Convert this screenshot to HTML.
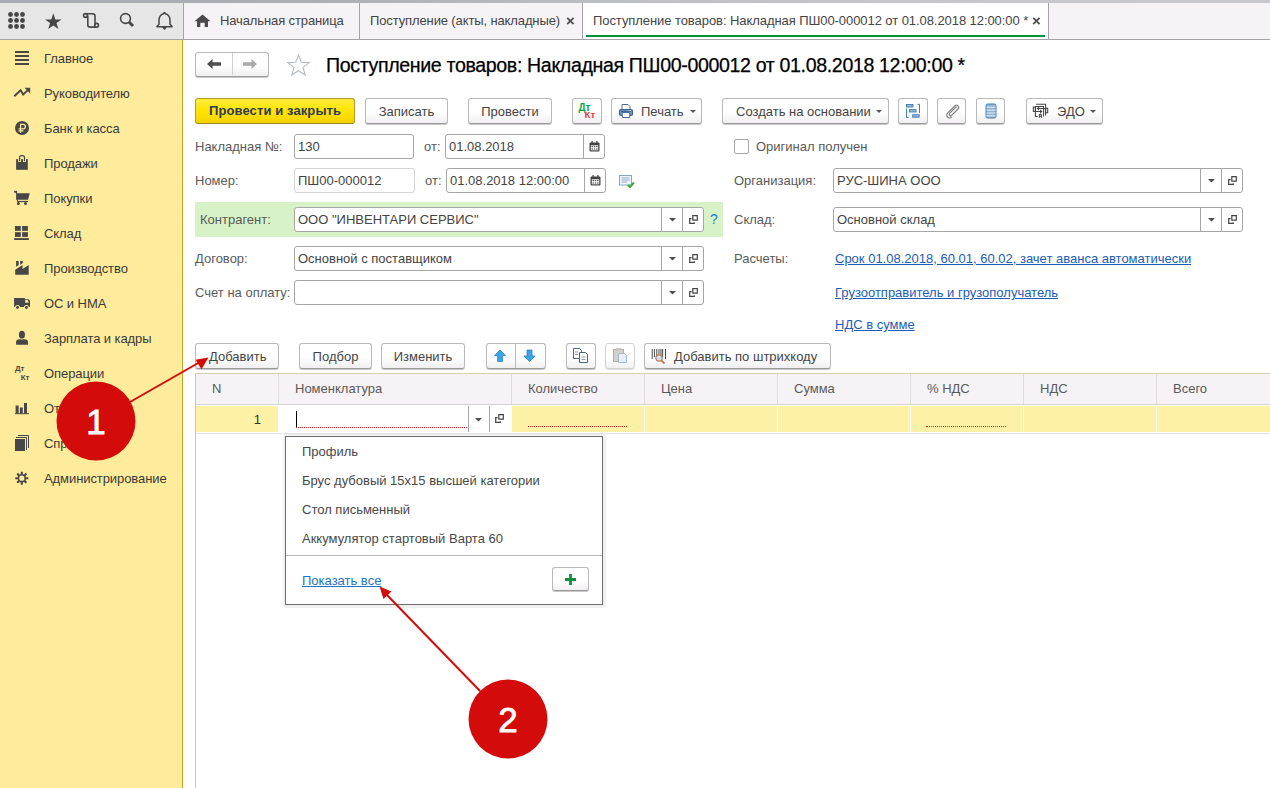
<!DOCTYPE html>
<html><head><meta charset="utf-8">
<style>
*{box-sizing:border-box;margin:0;padding:0}
html,body{width:1270px;height:788px;overflow:hidden;background:#fff;font-family:"Liberation Sans",sans-serif;font-size:13px;color:#333}
.a{position:absolute}
#topstrip{left:0;top:0;width:1270px;height:3px;background:linear-gradient(90deg,#a9abb4 0px,#adafb5 320px,#bfc0c4 640px,#c8c8cc 1000px,#c9c9cd 1270px)}
#tb{left:0;top:3px;width:183px;height:36px;background:#e6e6e6}
#tabs{left:184px;top:3px;width:1086px;height:36px;background:#f6f3f6}
#tbline{left:0;top:39px;width:1270px;height:1px;background:#a4a4a4}
#sep1{left:183px;top:3px;width:1px;height:36px;background:#a4a4a4}
#side{left:0;top:40px;width:182px;height:748px;background:#ffeb9c}
#sideb{left:182px;top:40px;width:1px;height:748px;background:#bba31c;box-shadow:-1px 0 0 #fff09e}
.si{position:absolute;left:44px;white-space:nowrap;color:#3a3a3a;letter-spacing:-0.08px}
.tabt{position:absolute;top:13px;white-space:nowrap;color:#444;letter-spacing:-0.12px}
.lbl{position:absolute;white-space:nowrap;color:#4d4d4d}
.fld{position:absolute;border:1px solid #a9a9a9;border-radius:3px;background:#fff;height:25px}
.fld .v{position:absolute;left:4px;top:5px;white-space:nowrap;color:#333}
.btn{position:absolute;height:26px;border:1px solid #b8b8b8;border-radius:3px;background:linear-gradient(#fff 60%,#ebebeb);box-shadow:0 1px 1px rgba(0,0,0,.25);white-space:nowrap;color:#333;text-align:center;line-height:24px}

.bt{position:absolute;height:26px;border:1px solid #b9b9b9;border-bottom-color:#9a9a9a;border-radius:3px;background:linear-gradient(#fff 0%,#fff 55%,#f1eff1 100%);box-shadow:0 1px 0 #c8c8c8;white-space:nowrap;color:#444;text-align:center;line-height:15px;padding-top:5px}
.lb{position:absolute;white-space:nowrap;color:#5a5a5a;margin-top:1px}
.f{position:absolute;border:1px solid #a6a6a6;border-radius:3px;background:#fff;height:25px}
.f .v{position:absolute;left:3px;top:4px;white-space:nowrap;color:#444}
.f .d{position:absolute;top:0;width:1px;height:23px;background:#a6a6a6}
.lk{position:absolute;white-space:nowrap;color:#1d5cb8;text-decoration:underline}
</style></head><body>
<div class="a" id="topstrip"></div>
<div class="a" id="tb"></div>
<div class="a" id="tabs"></div>
<div class="a" id="sep1"></div>
<div class="a" id="tbline"></div>
<div class="a" id="side"></div>
<div class="a" id="sideb"></div>

<!-- active tab -->
<div class="a" style="left:583px;top:3px;width:465px;height:36px;background:#fff"></div>
<div class="a" style="left:359px;top:3px;width:1px;height:36px;background:#a4a4a4"></div>
<div class="a" style="left:582px;top:3px;width:1px;height:36px;background:#a4a4a4"></div>
<div class="a" style="left:1048px;top:3px;width:1px;height:36px;background:#a4a4a4"></div>
<div class="a" style="left:586px;top:35px;width:459px;height:2px;background:#00933e"></div>
<div class="tabt" style="left:220px">Начальная страница</div>
<div class="tabt" style="left:370px">Поступление (акты, накладные)</div>
<div class="tabt" style="left:593px;letter-spacing:-0.07px">Поступление товаров: Накладная ПШ00-000012 от 01.08.2018 12:00:00 *</div>

<!-- sidebar items -->
<div class="si" style="top:51px">Главное</div>
<div class="si" style="top:86px">Руководителю</div>
<div class="si" style="top:121px">Банк и касса</div>
<div class="si" style="top:156px">Продажи</div>
<div class="si" style="top:191px">Покупки</div>
<div class="si" style="top:226px">Склад</div>
<div class="si" style="top:261px">Производство</div>
<div class="si" style="top:296px">ОС и НМА</div>
<div class="si" style="top:331px">Зарплата и кадры</div>
<div class="si" style="top:366px">Операции</div>
<div class="si" style="top:401px">Отчеты</div>
<div class="si" style="top:436px">Справочники</div>
<div class="si" style="top:471px">Администрирование</div>


<!-- toolbar icons -->
<svg class="a" style="left:0;top:0" width="183" height="39" viewBox="0 0 183 39">
 <g fill="#474747">
  <circle cx="10.5" cy="14.5" r="2.4"/><circle cx="16.5" cy="14.5" r="2.4"/><circle cx="22.5" cy="14.5" r="2.4"/>
  <circle cx="10.5" cy="20.5" r="2.4"/><circle cx="16.5" cy="20.5" r="2.4"/><circle cx="22.5" cy="20.5" r="2.4"/>
  <circle cx="10.5" cy="26.5" r="2.4"/><circle cx="16.5" cy="26.5" r="2.4"/><circle cx="22.5" cy="26.5" r="2.4"/>
  <path d="M53.3 13.3 L55.3 19.4 L61.6 19.4 L56.5 23.1 L58.4 29 L53.3 25.4 L48.2 29 L50.1 23.1 L45 19.4 L51.3 19.4 Z"/>
 </g>
 <g fill="none" stroke="#474747" stroke-width="1.6">
  <path d="M85.5 13.7 H92.6 Q95 13.7 95 16.1 V25.3 M96.6 27.1 H90.2 Q87.8 27.1 87.8 24.7 V15.5"/>
  <circle cx="85.5" cy="15.5" r="1.9"/>
  <circle cx="96.6" cy="25.3" r="1.9"/>
  <circle cx="125.5" cy="18.5" r="4.9"/>
 </g>
 <path d="M129 22 L133 26" stroke="#474747" stroke-width="3"/>
 <path d="M164.5 12.5 L165.5 13.8 Q170 15.2 170 20.5 V24.2 L172 26.2 V26.8 H157 V26.2 L159 24.2 V20.5 Q159 15.2 163.5 13.8 Z M163 27.3 H166 L164.5 29 Z" fill="none" stroke="#474747" stroke-width="1.5" stroke-linejoin="round"/>
</svg>
<!-- home icon -->
<svg class="a" style="left:194px;top:14px" width="18" height="14" viewBox="0 0 18 14">
 <path d="M8.5 0.6 L16.5 7.2 H14 V13 H10.7 V8.7 H6.3 V13 H3 V7.2 H0.5 Z" fill="#4a4a4a"/>
</svg>
<!-- close x -->
<svg class="a" style="left:566px;top:17px" width="9" height="8" viewBox="0 0 9 8"><path d="M1.2 0.8 L7.6 7.2 M7.6 0.8 L1.2 7.2" stroke="#4d4d4d" stroke-width="1.7"/></svg>
<svg class="a" style="left:1032px;top:17px" width="9" height="8" viewBox="0 0 9 8"><path d="M1.2 0.8 L7.6 7.2 M7.6 0.8 L1.2 7.2" stroke="#4d4d4d" stroke-width="1.7"/></svg>

<!-- sidebar icons -->
<svg class="a" style="left:0;top:40px" width="40" height="460" viewBox="0 40 40 460">
 <g fill="#474747">
  <rect x="15" y="51" width="14" height="2"/><rect x="15" y="55" width="14" height="2"/><rect x="15" y="59" width="14" height="2"/><rect x="15" y="63" width="14" height="2"/>
  <path d="M24.5 87.8 L30.2 87.8 L30.2 93.5 Z"/>
  <circle cx="22" cy="128" r="7"/>
  <path d="M16.1 159.1 H27.8 V169.8 H16.1 Z"/>
  <rect x="14.1" y="190.9" width="2.9" height="1.8"/><rect x="15.9" y="190.9" width="1.2" height="3"/>
  <path d="M16.1 193.2 H29.8 L28 199.8 H16.1 Z"/>
  <rect x="16.9" y="199.5" width="1" height="2.2"/>
  <rect x="17.2" y="200.9" width="10.8" height="1.2"/>
  <circle cx="18.4" cy="203.5" r="1.5"/><circle cx="25.5" cy="203.5" r="1.5"/>
  <rect x="15" y="226" width="5.8" height="4.8"/><rect x="22.1" y="226" width="5.8" height="4.8"/>
  <rect x="15" y="232.2" width="5.8" height="4.7"/><rect x="22.1" y="232.2" width="5.8" height="4.7"/>
  <rect x="14.1" y="238.1" width="14.8" height="1.9"/>
  <path d="M15.2 274.7 V269.7 L22.5 265.1 V269.1 L28.7 265.1 V274.7 Z"/><path d="M16.1 261 H18.7 V265.1 L16.1 266.7 Z"/><path d="M20.2 261 H22.8 V262.9 L20.2 264.8 Z"/>
  <path d="M14.1 297.9 H24.8 V299.2 H28.3 Q29.2 299.2 29.6 300.2 L30 301.5 V306.9 H14.1 Z"/>
  <path d="M16.1 344.8 V342.3 Q16.1 339.3 19.5 339.3 H24.6 Q28 339.3 28 342.3 V344.8 Z"/>
  <ellipse cx="21.95" cy="334.7" rx="3.9" ry="4.8" fill="#ffeb9c"/>
  <ellipse cx="21.95" cy="334.7" rx="3" ry="3.9"/>
  <rect x="15.6" y="405.5" width="3" height="8"/><rect x="19.8" y="407.5" width="3" height="6"/><rect x="24" y="403" width="3" height="10.5"/>
  <rect x="15" y="413.2" width="14" height="1"/>
  <rect x="15" y="439" width="10" height="12"/>
 </g>
 <path d="M19.6 162 V158 M24.5 162 V158" stroke="#ffeb9c" stroke-width="3"/><path d="M19.6 161.3 V157.6 Q19.6 155.6 21.6 155.6 H22.5 Q24.5 155.6 24.5 157.6 V161.3" fill="none" stroke="#474747" stroke-width="1.2"/>
 <path d="M14.3 96.3 L20.6 90.2 L23.2 94.5 L28.4 89.6" fill="none" stroke="#474747" stroke-width="1.9"/>
 <path d="M25 115 " />
 <path d="M20.6 133 V124.3 H23.2 Q25.4 124.3 25.4 126.6 Q25.4 128.9 23.2 128.9 H18.6 M18.6 130.8 H23.4" fill="none" stroke="#ffeb9c" stroke-width="1.25"/>
 <path d="M25.2 300.1 H27.9 L28.7 302.8 H25.2 Z" fill="#ffeb9c"/>
 <circle cx="17.5" cy="307.5" r="2.5" fill="#ffeb9c"/><circle cx="26.4" cy="307.5" r="2.5" fill="#ffeb9c"/>
 <circle cx="17.5" cy="307.5" r="1.45" fill="#474747"/><circle cx="26.4" cy="307.5" r="1.45" fill="#474747"/>
 <text x="15" y="371.3" font-family="Liberation Sans" font-size="7.8" font-weight="bold" fill="#474747">Дт</text>
 <text x="20.8" y="379.6" font-family="Liberation Sans" font-size="7.8" font-weight="bold" fill="#474747">Кт</text>
 <path d="M16 437.5 H26.5 V450 M18 435.5 H28.5 V448" fill="none" stroke="#474747" stroke-width="1"/>
 <path d="M25.40 478.20 L28.30 478.20 M24.35 480.75 L26.40 482.80 M21.80 481.80 L21.80 484.70 M19.25 480.75 L17.20 482.80 M18.20 478.20 L15.30 478.20 M19.25 475.65 L17.20 473.60 M21.80 474.60 L21.80 471.70 M24.35 475.65 L26.40 473.60 " stroke="#474747" stroke-width="2.1"/>
 <circle cx="21.8" cy="478.2" r="3.4" fill="none" stroke="#474747" stroke-width="1.6"/>
</svg>


<!-- nav buttons -->
<div class="bt" style="left:195px;top:52px;width:74px;height:25px"></div>
<div class="a" style="left:232px;top:53px;width:1px;height:22px;background:#d0d0d0"></div>
<svg class="a" style="left:205px;top:57px" width="60" height="14" viewBox="0 0 60 14">
 <path d="M2 7 L7.5 2 V5.3 H16 V8.7 H7.5 V12 Z" fill="#4d4d4d"/>
 <path d="M52 7 L46.5 2 V5.3 H38 V8.7 H46.5 V12 Z" fill="#a9a9a9"/>
</svg>
<svg class="a" style="left:286px;top:53px" width="25" height="24" viewBox="0 0 25 24">
 <path d="M12.5 2 L15.3 9.3 L23.2 9.6 L17 14.4 L19.2 22 L12.5 17.7 L5.8 22 L8 14.4 L1.8 9.6 L9.7 9.3 Z" fill="none" stroke="#b4bcc6" stroke-width="1.1" stroke-linejoin="miter"/>
</svg>

<!-- command bar -->
<div class="a" style="left:195px;top:98px;width:160px;height:26px;border:1px solid #b39b2a;border-bottom-color:#9c8620;border-radius:3px;background:linear-gradient(#ffec40 0%,#ffe60a 40%,#ffe000 60%,#f4d200 100%)"></div>
<div class="a" style="left:209px;top:103px;font-weight:bold;color:#2f3a56;white-space:nowrap;letter-spacing:0.1px">Провести и закрыть</div>
<div class="bt" style="left:365px;top:98px;width:83px">Записать</div>
<div class="bt" style="left:468px;top:98px;width:84px">Провести</div>
<div class="bt" style="left:572px;top:98px;width:30px"></div>
<svg class="a" style="left:577px;top:102px" width="20" height="18" viewBox="0 0 20 18">
 <text x="1.5" y="8.6" font-family="Liberation Sans" font-size="10" font-weight="bold" fill="#10a040">Дт</text>
 <text x="7.6" y="15.8" font-family="Liberation Sans" font-size="9.5" font-weight="bold" fill="#e03a3a">Кт</text>
</svg>
<div class="bt" style="left:611px;top:98px;width:91px;text-align:left;padding-left:29px">Печать</div>
<svg class="a" style="left:618px;top:103px" width="16" height="16" viewBox="0 0 16 16">
 <path d="M4 1.5 H10 L12 3.5 V7 H4 Z" fill="#fff" stroke="#4a6f94" stroke-width="1"/>
 <rect x="1.5" y="6.5" width="13" height="6" rx="1.5" fill="#6f98c0" stroke="#3b6590" stroke-width="1.2"/>
 <path d="M3 8.3 H13" stroke="#2c5580" stroke-width="0.9"/>
 <rect x="10.5" y="7.2" width="1" height="0.9" fill="#fff"/><rect x="12" y="7.2" width="1" height="0.9" fill="#fff"/>
 <path d="M4.3 9.5 H11.7 V14.5 H4.3 Z" fill="#fff" stroke="#4a6f94" stroke-width="1"/>
</svg>
<svg class="a" style="left:690px;top:110px" width="6" height="4" viewBox="0 0 6 4"><path d="M0 0 H6 L3 3 Z" fill="#555"/></svg>
<div class="bt" style="left:722px;top:98px;width:167px;text-align:left;padding-left:13px">Создать на основании</div>
<svg class="a" style="left:876px;top:110px" width="6" height="4" viewBox="0 0 6 4"><path d="M0 0 H6 L3 3 Z" fill="#555"/></svg>
<div class="bt" style="left:898px;top:98px;width:30px"></div>
<svg class="a" style="left:904px;top:102px" width="18" height="18" viewBox="0 0 18 18">
 <g fill="#8fb6d8" stroke="#3f7fb5" stroke-width="0.9">
  <rect x="2.5" y="2.5" width="6.5" height="2.5"/><rect x="5.5" y="7.5" width="6.5" height="2.5"/><rect x="8.7" y="12.7" width="6.5" height="2.5"/>
 </g>
 <path d="M2.5 6.5 V15.5 H4.5 M15.5 11 V2.3 H13.5" fill="none" stroke="#3f7fb5" stroke-width="1"/>
</svg>
<div class="bt" style="left:937px;top:98px;width:29px"></div>
<svg class="a" style="left:943px;top:102px" width="18" height="18" viewBox="0 0 18 18">
 <path d="M13.5 4.5 L6.8 11.2 Q5.6 12.4 6.6 13.4 Q7.6 14.4 8.8 13.2 L15 7 Q16.6 5.4 15 3.8 Q13.4 2.2 11.8 3.8 L4.8 10.8 Q2.6 13 4.6 15 Q6.6 17 8.8 14.8" fill="none" stroke="#7a7a7a" stroke-width="1.1"/>
</svg>
<div class="bt" style="left:976px;top:98px;width:29px"></div>
<svg class="a" style="left:985px;top:103px" width="12" height="16" viewBox="0 0 12 16">
 <rect x="1" y="1" width="10" height="14" rx="1.5" fill="#8db4d6" stroke="#4f80ad" stroke-width="1"/>
 <path d="M1.5 4.2 H10.5 M1.5 7.2 H10.5 M1.5 10 H10.5 M1.5 12.8 H10.5" stroke="#e6f0f8" stroke-width="1"/>
</svg>
<div class="bt" style="left:1026px;top:98px;width:77px;text-align:left;padding-left:30px">ЭДО</div>
<svg class="a" style="left:1032px;top:103px" width="18" height="16" viewBox="0 0 18 16">
 <g fill="none" stroke="#444" stroke-width="1.05">
  <path d="M4.1 1.3 H13.6 V12.6"/>
  <path d="M5.8 13.5 H3.4 V3.4 H11.6 V13.6"/>
  <rect x="1.3" y="4.1" width="2.1" height="4.3"/>
  <rect x="13.6" y="5.2" width="2.1" height="4.5"/>
  <path d="M5.5 5.4 H13 M7 4 L5.5 5.4 L7 6.8"/>
  <path d="M3.4 8.4 H9.7 M8.2 7 L9.7 8.4 L8.2 9.8"/>
  <circle cx="8.4" cy="12.2" r="1.1"/>
  <path d="M7.7 13.2 L7 14.8 M9.1 13.2 L9.8 14.8"/>
 </g>
</svg>
<svg class="a" style="left:1090px;top:110px" width="6" height="4" viewBox="0 0 6 4"><path d="M0 0 H6 L3 3 Z" fill="#555"/></svg>

<!-- row1 -->
<div class="lb" style="left:195px;top:138px">Накладная №:</div>
<div class="f" style="left:294px;top:134px;width:120px"><div class="v">130</div></div>
<div class="lb" style="left:424px;top:138px">от:</div>
<div class="f" style="left:445px;top:134px;width:160px"><div class="v">01.08.2018</div><div class="d" style="left:137px"></div><svg style="position:absolute;left:143px;top:6px" width="11" height="11" viewBox="0 0 11 11"><rect x="0.5" y="1.5" width="10" height="9" rx="1" fill="#444"/><rect x="1.8" y="4.3" width="7.4" height="5" fill="#fff"/><g fill="#444"><rect x="2.6" y="5" width="1.3" height="1.2"/><rect x="4.85" y="5" width="1.3" height="1.2"/><rect x="7.1" y="5" width="1.3" height="1.2"/><rect x="2.6" y="7.4" width="1.3" height="1.2"/><rect x="4.85" y="7.4" width="1.3" height="1.2"/><rect x="7.1" y="7.4" width="1.3" height="1.2"/></g><rect x="2.5" y="0" width="1.2" height="2.5" fill="#444"/><rect x="7.3" y="0" width="1.2" height="2.5" fill="#444"/></svg></div>
<div class="a" style="left:734px;top:139px;width:15px;height:15px;border:1px solid #a6a6a6;border-radius:2px;background:#fff"></div>
<div class="lb" style="left:756px;top:138px">Оригинал получен</div>
<!-- row2 -->
<div class="lb" style="left:195px;top:172px">Номер:</div>
<div class="f" style="left:294px;top:168px;width:121px;border-color:#d4d4d4"><div class="v">ПШ00-000012</div></div>
<div class="lb" style="left:425px;top:172px">от:</div>
<div class="f" style="left:446px;top:168px;width:160px"><div class="v">01.08.2018 12:00:00</div><div class="d" style="left:137px"></div><svg style="position:absolute;left:143px;top:6px" width="11" height="11" viewBox="0 0 11 11"><rect x="0.5" y="1.5" width="10" height="9" rx="1" fill="#444"/><rect x="1.8" y="4.3" width="7.4" height="5" fill="#fff"/><g fill="#444"><rect x="2.6" y="5" width="1.3" height="1.2"/><rect x="4.85" y="5" width="1.3" height="1.2"/><rect x="7.1" y="5" width="1.3" height="1.2"/><rect x="2.6" y="7.4" width="1.3" height="1.2"/><rect x="4.85" y="7.4" width="1.3" height="1.2"/><rect x="7.1" y="7.4" width="1.3" height="1.2"/></g><rect x="2.5" y="0" width="1.2" height="2.5" fill="#444"/><rect x="7.3" y="0" width="1.2" height="2.5" fill="#444"/></svg></div>
<div class="lb" style="left:734px;top:172px">Организация:</div>
<div class="f" style="left:833px;top:168px;width:410px"><div class="v">РУС-ШИНА ООО</div><div class="d" style="left:366px"></div><div class="d" style="left:387px"></div><svg style="position:absolute;left:374px;top:10px" width="7" height="4" viewBox="0 0 7 4"><path d="M0 0 H7 L3.5 3.5 Z" fill="#4d4d4d"/></svg><svg style="position:absolute;left:394px;top:7px" width="11" height="11" viewBox="0 0 11 11"><path d="M2.6 3.6 H0.7 V8.3 H5.3 V7.3 M3.8 0.7 H8.3 V5.2 H3.8 Z" fill="none" stroke="#444" stroke-width="1.2"/></svg></div>
<!-- row3 -->
<div class="a" style="left:195px;top:202px;width:528px;height:35px;background:#d6f2c6"></div>
<div class="lb" style="left:200px;top:211px">Контрагент:</div>
<div class="f" style="left:294px;top:207px;width:410px"><div class="v">ООО "ИНВЕНТАРИ СЕРВИС"</div><div class="d" style="left:366px"></div><div class="d" style="left:387px"></div><svg style="position:absolute;left:374px;top:10px" width="7" height="4" viewBox="0 0 7 4"><path d="M0 0 H7 L3.5 3.5 Z" fill="#4d4d4d"/></svg><svg style="position:absolute;left:394px;top:7px" width="11" height="11" viewBox="0 0 11 11"><path d="M2.6 3.6 H0.7 V8.3 H5.3 V7.3 M3.8 0.7 H8.3 V5.2 H3.8 Z" fill="none" stroke="#444" stroke-width="1.2"/></svg></div>
<div class="a" style="left:710px;top:211px;color:#1a80cc;font-size:14px">?</div>
<div class="lb" style="left:734px;top:211px">Склад:</div>
<div class="f" style="left:833px;top:207px;width:410px"><div class="v">Основной склад</div><div class="d" style="left:366px"></div><div class="d" style="left:387px"></div><svg style="position:absolute;left:374px;top:10px" width="7" height="4" viewBox="0 0 7 4"><path d="M0 0 H7 L3.5 3.5 Z" fill="#4d4d4d"/></svg><svg style="position:absolute;left:394px;top:7px" width="11" height="11" viewBox="0 0 11 11"><path d="M2.6 3.6 H0.7 V8.3 H5.3 V7.3 M3.8 0.7 H8.3 V5.2 H3.8 Z" fill="none" stroke="#444" stroke-width="1.2"/></svg></div>
<!-- row4 -->
<div class="lb" style="left:195px;top:250px">Договор:</div>
<div class="f" style="left:294px;top:246px;width:410px"><div class="v">Основной с поставщиком</div><div class="d" style="left:366px"></div><div class="d" style="left:387px"></div><svg style="position:absolute;left:374px;top:10px" width="7" height="4" viewBox="0 0 7 4"><path d="M0 0 H7 L3.5 3.5 Z" fill="#4d4d4d"/></svg><svg style="position:absolute;left:394px;top:7px" width="11" height="11" viewBox="0 0 11 11"><path d="M2.6 3.6 H0.7 V8.3 H5.3 V7.3 M3.8 0.7 H8.3 V5.2 H3.8 Z" fill="none" stroke="#444" stroke-width="1.2"/></svg></div>
<div class="lb" style="left:734px;top:250px">Расчеты:</div>
<div class="lk" style="left:835px;top:251px">Срок 01.08.2018, 60.01, 60.02, зачет аванса автоматически</div>
<!-- row5 -->
<div class="lb" style="left:195px;top:284px">Счет на оплату:</div>
<div class="f" style="left:294px;top:280px;width:410px"><div class="d" style="left:366px"></div><div class="d" style="left:387px"></div><svg style="position:absolute;left:374px;top:10px" width="7" height="4" viewBox="0 0 7 4"><path d="M0 0 H7 L3.5 3.5 Z" fill="#4d4d4d"/></svg><svg style="position:absolute;left:394px;top:7px" width="11" height="11" viewBox="0 0 11 11"><path d="M2.6 3.6 H0.7 V8.3 H5.3 V7.3 M3.8 0.7 H8.3 V5.2 H3.8 Z" fill="none" stroke="#444" stroke-width="1.2"/></svg></div>
<div class="lk" style="left:835px;top:285px">Грузоотправитель и грузополучатель</div>
<div class="lk" style="left:835px;top:317px">НДС в сумме</div>


<!-- table toolbar -->
<div class="bt" style="left:195px;top:343px;width:84px;text-align:left;padding-left:13px">Добавить</div>
<div class="bt" style="left:299px;top:343px;width:73px">Подбор</div>
<div class="bt" style="left:381px;top:343px;width:84px">Изменить</div>
<div class="bt" style="left:486px;top:343px;width:60px"></div>
<div class="a" style="left:515px;top:344px;width:1px;height:24px;background:#b9b9b9"></div>
<svg class="a" style="left:494px;top:349px" width="44" height="14" viewBox="0 0 44 14">
 <path d="M6 1 L11.5 6.5 H8.5 V12.5 H3.5 V6.5 H0.5 Z" fill="#3aa5e6" stroke="#2b86c4" stroke-width="0.8"/>
 <path d="M35.5 12.5 L30 7 H33 V1 H38 V7 H41 Z" fill="#3aa5e6" stroke="#2b86c4" stroke-width="0.8"/>
</svg>
<div class="bt" style="left:566px;top:343px;width:30px"></div>
<svg class="a" style="left:572px;top:347px" width="18" height="17" viewBox="0 0 18 17">
 <g fill="#fff" stroke="#4b6584" stroke-width="1">
  <path d="M1.5 1.5 H7.5 L9.5 3.5 V11.5 H1.5 Z"/>
  <path d="M7.5 5.5 H13.5 L15.5 7.5 V15.5 H7.5 Z"/>
 </g>
 <path d="M3 5 H6 M3 7.5 H6 M9.5 10 H13.5 M9.5 12.5 H13.5" stroke="#7a8ea6" stroke-width="0.9"/>
</svg>
<div class="bt" style="left:605px;top:343px;width:30px;border-color:#d2d2d2;box-shadow:0 1px 0 #dedede"></div>
<svg class="a" style="left:612px;top:347px" width="17" height="17" viewBox="0 0 17 17">
 <rect x="1.5" y="2.5" width="10" height="12" fill="#d6d0cc" stroke="#b8aca6" stroke-width="1"/>
 <rect x="4" y="1" width="5" height="3" fill="#c8c8c8"/>
 <path d="M6.5 6.5 H12.5 L14.5 8.5 V15.5 H6.5 Z" fill="#e8eef4" stroke="#a8b8cc" stroke-width="1"/>
</svg>
<div class="bt" style="left:644px;top:343px;width:187px;text-align:left;padding-left:29px">Добавить по штрихкоду</div>
<svg class="a" style="left:651px;top:348px" width="17" height="17" viewBox="0 0 17 17">
 <path d="M1.2 1 V11 M3.4 1 V9 M5.8 1 V8 M8 1 V6.5 M10 1 V7 M11.6 1 V9 M14.5 1 V11" stroke="#333" stroke-width="0.9"/>
 <circle cx="8" cy="10" r="3.2" fill="#cfe0f6" stroke="#c07a4a" stroke-width="1.2"/>
 <path d="M10.3 12.3 L13.5 15.5" stroke="#c07a4a" stroke-width="1.8"/>
</svg>

<!-- table -->
<div class="a" style="left:195px;top:373px;width:1075px;height:415px;border-left:1px solid #cfc8a8;border-top:1px solid #d6cfb0;background:#fff"></div>
<div class="a" style="left:196px;top:374px;width:1074px;height:30px;background:#f6f2f6"></div>
<div class="a" style="left:196px;top:404px;width:1074px;height:1px;background:#d4d4d4"></div>
<div class="a" style="left:196px;top:405px;width:1074px;height:1px;background:#fff"></div><div class="a" style="left:196px;top:406px;width:1074px;height:26px;background:#fdf1a6"></div>
<div class="a" style="left:196px;top:433px;width:1074px;height:1px;background:#e2e2e2"></div>
<div class="a" style="left:278px;top:374px;width:1px;height:30px;background:#dcdcdc"></div>
<div class="a" style="left:278px;top:405px;width:1px;height:27px;background:#fff"></div>
<div class="a" style="left:511px;top:374px;width:1px;height:30px;background:#dcdcdc"></div>
<div class="a" style="left:511px;top:405px;width:1px;height:27px;background:#fff"></div>
<div class="a" style="left:644px;top:374px;width:1px;height:30px;background:#dcdcdc"></div>
<div class="a" style="left:644px;top:405px;width:1px;height:27px;background:#fff"></div>
<div class="a" style="left:777px;top:374px;width:1px;height:30px;background:#dcdcdc"></div>
<div class="a" style="left:777px;top:405px;width:1px;height:27px;background:#fff"></div>
<div class="a" style="left:910px;top:374px;width:1px;height:30px;background:#dcdcdc"></div>
<div class="a" style="left:910px;top:405px;width:1px;height:27px;background:#fff"></div>
<div class="a" style="left:1023px;top:374px;width:1px;height:30px;background:#dcdcdc"></div>
<div class="a" style="left:1023px;top:405px;width:1px;height:27px;background:#fff"></div>
<div class="a" style="left:1156px;top:374px;width:1px;height:30px;background:#dcdcdc"></div>
<div class="a" style="left:1156px;top:405px;width:1px;height:27px;background:#fff"></div>
<div class="lb" style="left:212px;top:380px">N</div>
<div class="lb" style="left:295px;top:380px">Номенклатура</div>
<div class="lb" style="left:528px;top:380px">Количество</div>
<div class="lb" style="left:661px;top:380px">Цена</div>
<div class="lb" style="left:794px;top:380px">Сумма</div>
<div class="lb" style="left:927px;top:380px">% НДС</div>
<div class="lb" style="left:1040px;top:380px">НДС</div>
<div class="lb" style="left:1173px;top:380px">Всего</div>
<div class="a" style="left:196px;top:412px;width:65px;text-align:right;color:#333">1</div>
<div class="a" style="left:279px;top:405px;width:232px;height:27px;background:#fff"></div>
<div class="a" style="left:296px;top:411px;width:1px;height:16px;background:#000"></div>
<div class="a" style="left:296px;top:427px;width:171px;height:0;border-top:1px dotted #e02020"></div>
<div class="a" style="left:468px;top:406px;width:1px;height:26px;background:#a6a6a6"></div>
<div class="a" style="left:489px;top:406px;width:1px;height:26px;background:#a6a6a6"></div>
<svg class="a" style="left:475px;top:418px" width="7" height="4" viewBox="0 0 7 4"><path d="M0 0 H7 L3.5 3.5 Z" fill="#4d4d4d"/></svg>
<svg class="a" style="left:495px;top:414px" width="11" height="11" viewBox="0 0 11 11"><path d="M2.6 3.6 H0.7 V8.3 H5.3 V7.3 M3.8 0.7 H8.3 V5.2 H3.8 Z" fill="none" stroke="#444" stroke-width="1.2"/></svg>
<div class="a" style="left:528px;top:426px;width:99px;height:0;border-top:1px dotted #e02020"></div>
<div class="a" style="left:926px;top:426px;width:80px;height:0;border-top:1px dotted #e02020"></div>

<svg class="a" style="left:619px;top:175px" width="16" height="14" viewBox="0 0 16 14">
 <rect x="0.5" y="0.5" width="12" height="9.5" fill="#eef3f8" stroke="#8aa6c4" stroke-width="1"/>
 <path d="M2.5 3 H10.5 M2.5 5 H10.5 M2.5 7 H8" stroke="#8aa6c4" stroke-width="0.9"/>
 <path d="M9 10 L11 12 L15 7.5" fill="none" stroke="#3aa63a" stroke-width="2"/>
</svg>

<!-- popup -->
<div class="a" style="left:283px;top:434px;width:323px;height:174px;background:rgba(0,0,0,0.06);border-radius:3px"></div>
<div class="a" style="left:285px;top:436px;width:318px;height:169px;border:1px solid #6e6e6e;background:#fff"></div>
<div class="a" style="left:286px;top:555px;width:316px;height:1px;background:#b5b5b5"></div>
<div class="lb" style="left:302px;top:443px;color:#484848">Профиль</div>
<div class="lb" style="left:302px;top:472px;color:#484848">Брус дубовый 15x15 высшей категории</div>
<div class="lb" style="left:302px;top:501px;color:#484848">Стол письменный</div>
<div class="lb" style="left:302px;top:530px;color:#484848">Аккумулятор стартовый Варта 60</div>
<div class="lk" style="left:302px;top:573px;color:#1c74c4">Показать все</div>
<div class="bt" style="left:552px;top:567px;width:37px;height:24px"></div>
<svg class="a" style="left:565px;top:574px" width="11" height="11" viewBox="0 0 11 11"><path d="M5.5 0 V11 M0 5.5 H11" stroke="#0f8f3c" stroke-width="2.8"/></svg>

<!-- annotations -->
<svg class="a" style="left:0;top:0" width="1270" height="788" viewBox="0 0 1270 788">
 <g stroke="#d40b0b" stroke-width="2" fill="#d40b0b">
  <path d="M130 402 L200 362"/>
  <path d="M480 691 L386 594"/>
 </g>
 <path d="M208.5 357.5 L195.5 359.8 L201.5 369.2 Z" fill="#d40b0b"/>
 <path d="M379.5 586.5 L383.5 599 L391.5 591.5 Z" fill="#d40b0b"/>
 <circle cx="96" cy="421" r="39.5" fill="#d40b0b"/>
 <circle cx="508" cy="719" r="39.5" fill="#d40b0b"/>
 <text x="96" y="434.4" font-family="Liberation Sans" font-size="35" fill="#fff" stroke="#fff" stroke-width="0.8" text-anchor="middle">1</text>
 <text x="508" y="732.4" font-family="Liberation Sans" font-size="35" fill="#fff" stroke="#fff" stroke-width="0.8" text-anchor="middle">2</text>
</svg>

<!-- title -->
<div class="a" style="left:326px;top:54px;font-size:19.6px;color:#000;white-space:nowrap;letter-spacing:-0.36px;-webkit-text-stroke:0.25px #000">Поступление товаров: Накладная ПШ00-000012 от 01.08.2018 12:00:00 *</div>

</body></html>
